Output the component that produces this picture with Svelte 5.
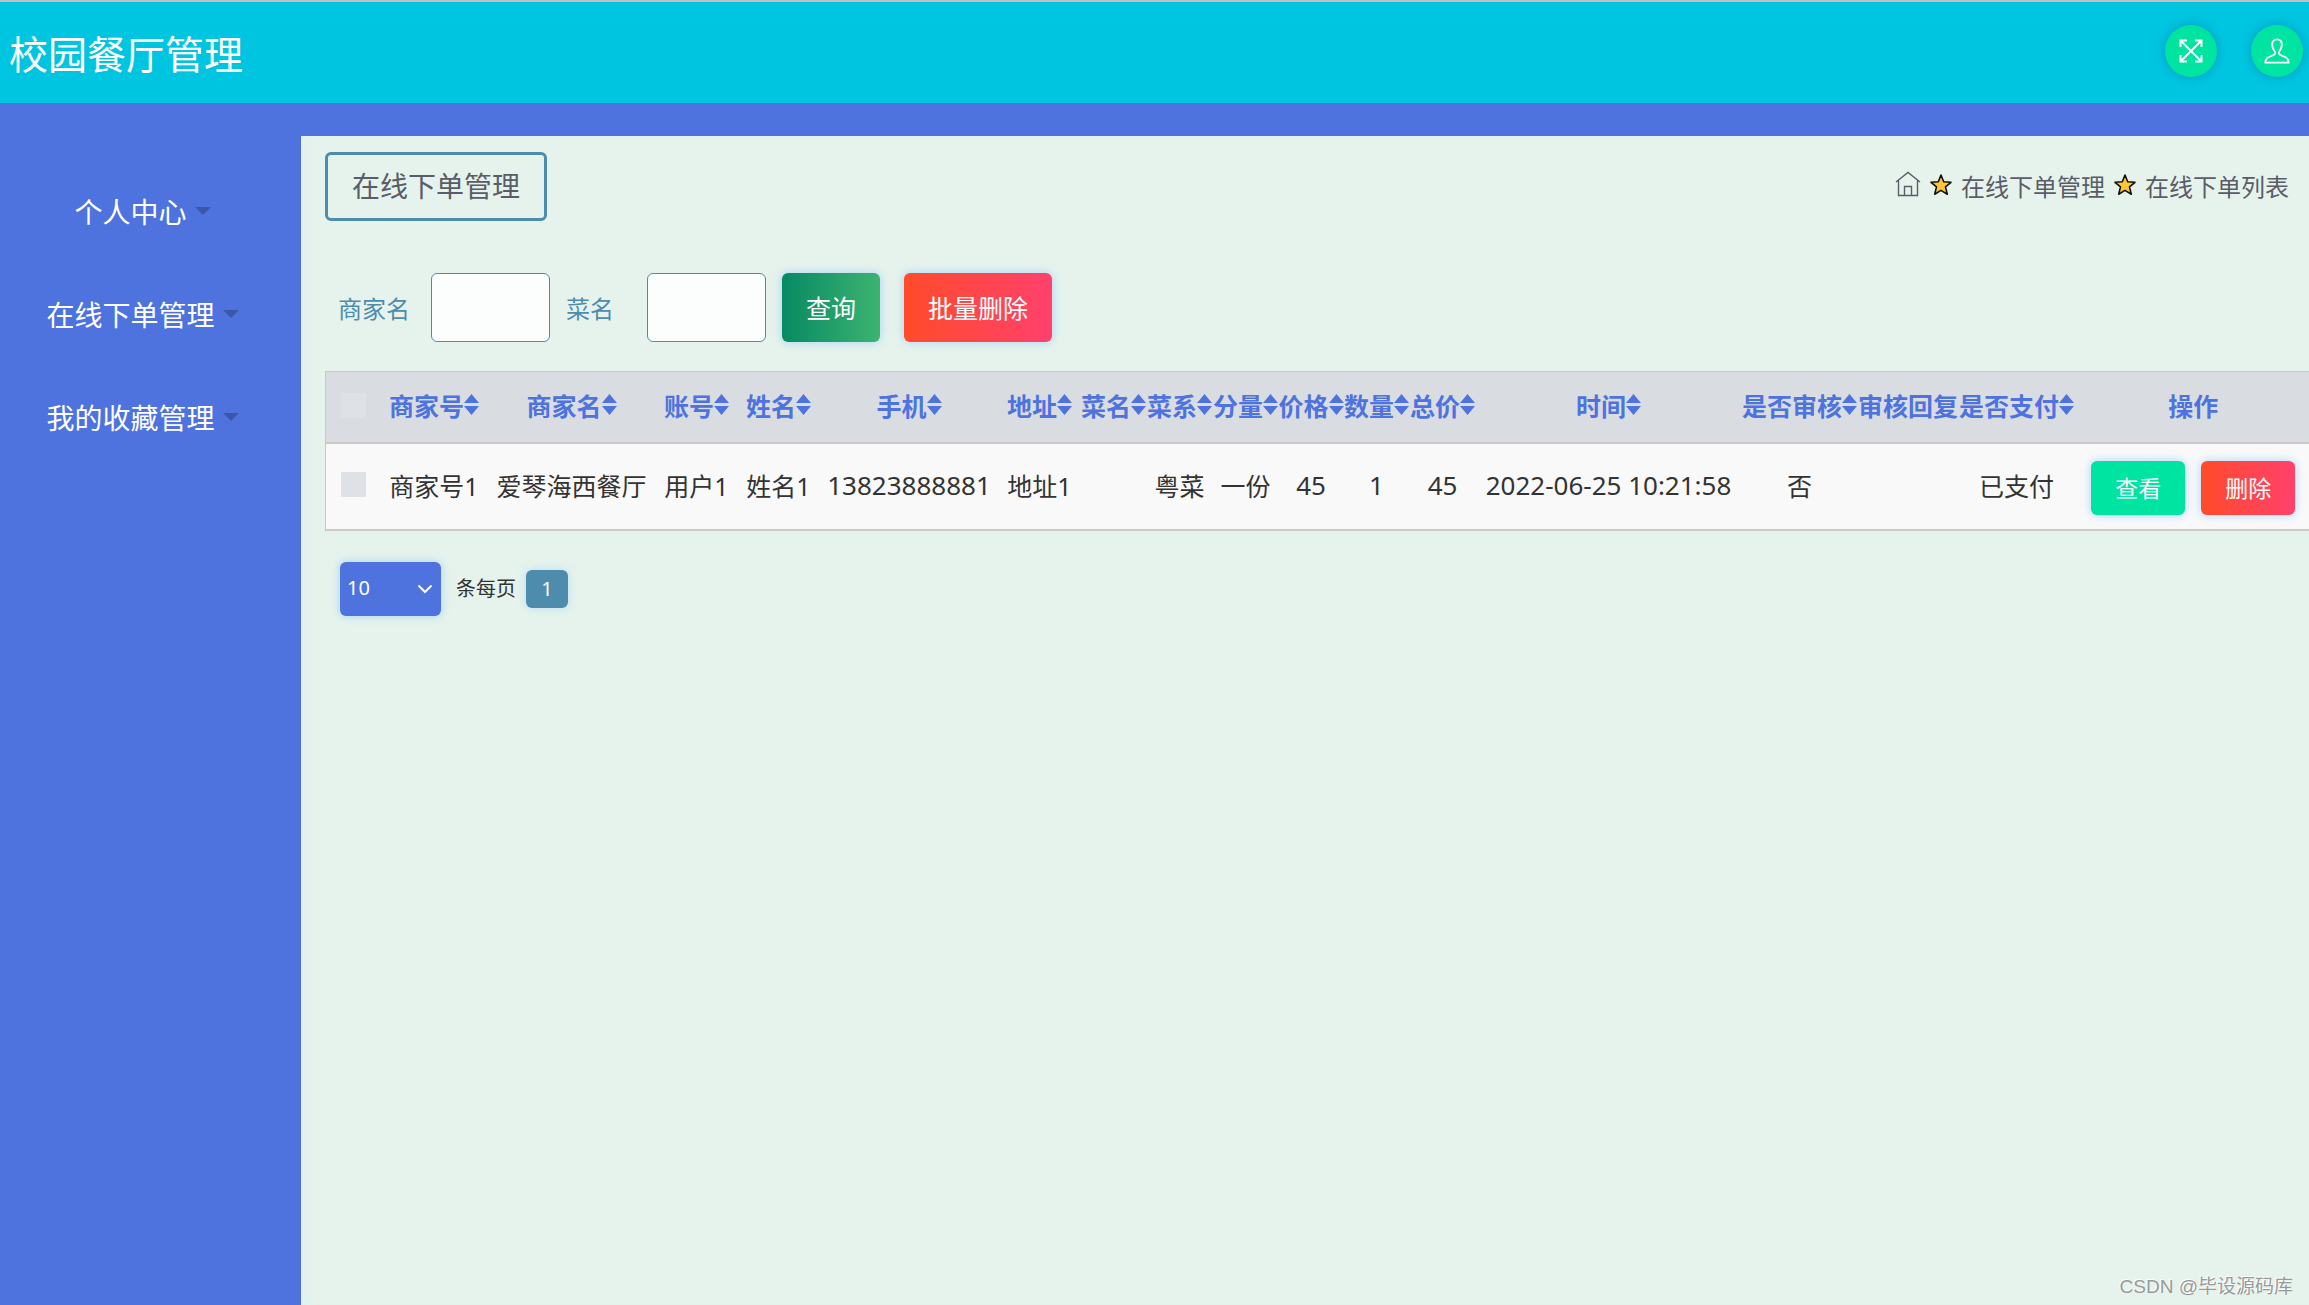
<script lang="ts">
  interface Column {
    key: string
    label: string
    width: number
    sortable?: boolean
    numeric?: boolean
  }

  const menus = ['个人中心', '在线下单管理', '我的收藏管理']

  const columns: Column[] = [
    { key: 'shopNo', label: '商家号', width: 107, sortable: true },
    { key: 'shopName', label: '商家名', width: 168, sortable: true },
    { key: 'account', label: '账号', width: 82, sortable: true },
    { key: 'name', label: '姓名', width: 82, sortable: true },
    { key: 'phone', label: '手机', width: 179, sortable: true, numeric: true },
    { key: 'address', label: '地址', width: 82, sortable: true },
    { key: 'dish', label: '菜名', width: 66, sortable: true },
    { key: 'cuisine', label: '菜系', width: 66, sortable: true },
    { key: 'portion', label: '分量', width: 66, sortable: true },
    { key: 'price', label: '价格', width: 65, sortable: true, numeric: true },
    { key: 'count', label: '数量', width: 66, sortable: true, numeric: true },
    { key: 'total', label: '总价', width: 66, sortable: true, numeric: true },
    { key: 'time', label: '时间', width: 266, sortable: true, numeric: true },
    { key: 'audited', label: '是否审核', width: 116, sortable: true },
    { key: 'reply', label: '审核回复', width: 101 },
    { key: 'paid', label: '是否支付', width: 116, sortable: true }
  ]

  let orders = $state<Record<string, string>[]>([
    {
      shopNo: '商家号1',
      shopName: '爱琴海西餐厅',
      account: '用户1',
      name: '姓名1',
      phone: '13823888881',
      address: '地址1',
      dish: '',
      cuisine: '粤菜',
      portion: '一份',
      price: '45',
      count: '1',
      total: '45',
      time: '2022-06-25 10:21:58',
      audited: '否',
      reply: '',
      paid: '已支付'
    }
  ])

  let shopName = $state('')
  let dishName = $state('')
  let pageSize = $state('10')
  let sortKey = $state('')
  let sortAsc = $state(true)
  let selected = $state<boolean[]>([false])

  function sortBy(key: string) {
    sortAsc = sortKey === key ? !sortAsc : true
    sortKey = key
    orders.sort((a, b) => a[key].localeCompare(b[key]) * (sortAsc ? 1 : -1))
  }

  function toggleAll(e: Event) {
    const checked = (e.target as HTMLInputElement).checked
    selected = orders.map(() => checked)
  }

  function removeSelected() {
    orders = orders.filter((_, i) => !selected[i])
    selected = orders.map(() => false)
  }

  function removeOrder(index: number) {
    orders = orders.filter((_, i) => i !== index)
    selected = orders.map(() => false)
  }
</script>

{#snippet star()}
  <svg class="star" viewBox="0 0 22 22" aria-hidden="true">
    <path d="M11 1l2.700 6.700 7.300.6-5.500 4.600 1.800 7.300L11 16.400l-6.300 3.800 1.800-7.300L1 8.300l7.300-.6z" />
  </svg>
{/snippet}

<div class="page">
  <header class="navbar">
    <h1>校园餐厅管理</h1>
    <div class="nav-actions">
      <button class="round" aria-label="全屏">
        <svg viewBox="0 0 26 26">
          <path d="M3 3l20 20M23 3L3 23M2.500 9V2.500H9M17 2.500h6.500V9M23.500 17v6.500H17M9 23.500H2.500V17" />
        </svg>
      </button>
      <button class="round" aria-label="用户">
        <svg viewBox="0 0 28 28">
          <path d="M14 1.500c-3.600 0-5.300 2.500-5.200 6 .1 3.300 1.200 5 2.700 6.800.9 1.300.6 3.200-1 4C6.500 20 1.500 20.500 1.500 26.500h25c0-6-5-6.500-9-8.200-1.600-.8-1.900-2.700-1-4 1.500-1.800 2.600-3.500 2.700-6.800.1-3.500-1.600-6-5.200-6z" />
        </svg>
      </button>
    </div>
  </header>

  <div class="layout">
    <nav class="sidebar">
      {#each menus as menu}
        <button class="menu-item">{menu}<span class="caret"></span></button>
      {/each}
    </nav>

    <main class="content">
      <div class="title-row">
        <h2>在线下单管理</h2>
        <div class="breadcrumb">
          <a href="#home" aria-label="首页">
            <svg class="home" viewBox="0 0 26 26">
              <path d="M1 11L13 1.500 25 11M3.500 9.500v15h19v-15M9.500 24.500v-9h7v9" />
            </svg>
          </a>
          {@render star()}
          <span>在线下单管理</span>
          {@render star()}
          <span>在线下单列表</span>
        </div>
      </div>

      <form class="filters" onsubmit={(e) => e.preventDefault()}>
        <label for="shop-name">商家名</label>
        <input id="shop-name" class="field" type="text" bind:value={shopName} />
        <label for="dish-name">菜名</label>
        <input id="dish-name" class="field" type="text" bind:value={dishName} />
        <button class="btn query" type="submit">查询</button>
        <button class="btn danger" type="button" onclick={removeSelected}>批量删除</button>
      </form>

      <table>
        <colgroup>
          <col style:width="55px" />
          {#each columns as column}
            <col style:width="{column.width}px" />
          {/each}
          <col style:width="238px" />
        </colgroup>
        <thead>
          <tr>
            <th class="check"><input type="checkbox" aria-label="全选" onchange={toggleAll} /></th>
            {#each columns as column}
              <th>
                {#if column.sortable}
                  <button class="sort" onclick={() => sortBy(column.key)}>
                    {column.label}<svg viewBox="0 0 15 24" aria-hidden="true">
                      <path d="M7.500 1L15 10H0zM0 13h15l-7.500 9z" />
                    </svg>
                  </button>
                {:else}
                  {column.label}
                {/if}
              </th>
            {/each}
            <th>操作</th>
          </tr>
        </thead>
        <tbody>
          {#each orders as order, i}
            <tr>
              <td class="check">
                <input type="checkbox" aria-label="选择" bind:checked={selected[i]} />
              </td>
              {#each columns as column}
                <td class:numeric={column.numeric}>{order[column.key]}</td>
              {/each}
              <td>
                <div class="row-actions">
                  <button class="btn small view">查看</button>
                  <button class="btn small danger" onclick={() => removeOrder(i)}>删除</button>
                </div>
              </td>
            </tr>
          {/each}
        </tbody>
      </table>

      <div class="pager">
        <div class="select-box">
          <select id="page-size" bind:value={pageSize}>
            <option>10</option>
            <option>25</option>
            <option>50</option>
            <option>100</option>
          </select>
          <svg viewBox="0 0 16 10" aria-hidden="true"><path d="M1.500 1.500L8 8l6.500-6.500" /></svg>
        </div>
        <label for="page-size">条每页</label>
        <button class="page-number">1</button>
      </div>
    </main>
  </div>

  <div class="watermark">CSDN @毕设源码库</div>
</div>

<style>
  :global(body) {
    background: #4e73df;
  }

  .page {
    position: relative;
    display: flex;
    flex-direction: column;
    min-height: 100vh;
    overflow: hidden;
    color: #333;
    font-family: 'Noto Sans', 'Noto Sans CJK SC', sans-serif;
    font-size: 25px;
  }

  button,
  input,
  select {
    box-sizing: border-box;
    margin: 0;
    font-family: inherit;
  }

  button {
    padding: 0;
    border: none;
    background: none;
    cursor: pointer;
  }

  h1,
  h2 {
    margin: 0;
    font-weight: 400;
  }

  .navbar {
    display: flex;
    align-items: center;
    justify-content: space-between;
    box-sizing: border-box;
    height: 103px;
    padding: 0 6px 4px 9px;
    border-top: 2px solid #c4bfc0;
    background: #00c5e0;
  }

  h1 {
    padding-top: 2px;
    color: #fff;
    font-size: 39px;
  }

  .nav-actions {
    display: flex;
    gap: 34px;
  }

  .round {
    display: flex;
    align-items: center;
    justify-content: center;
    width: 52px;
    height: 52px;
    border-radius: 50%;
    background: #00e4a1;
    box-shadow: 0 0 10px rgba(20, 100, 150, 0.45);
  }

  .round svg {
    width: 26px;
    height: 26px;
    fill: none;
    stroke: #fff;
    stroke-width: 2;
  }

  .layout {
    display: flex;
    flex: 1;
    padding-top: 33px;
    background: #4e73df;
  }

  .sidebar {
    display: flex;
    flex-direction: column;
    align-items: center;
    flex: 0 0 301px;
    box-sizing: border-box;
    padding: 23px 16px 0 0;
  }

  .menu-item {
    display: flex;
    align-items: center;
    gap: 8px;
    height: 103px;
    color: #fff;
    font-size: 28px;
  }

  .caret {
    border: 8px solid transparent;
    border-top-color: #3a57a8;
    border-bottom: none;
  }

  .content {
    flex: 1;
    min-width: 0;
    padding: 16px 0 0 24px;
    background: #e6f3ec;
    box-shadow: inset 8px 0 8px -4px #dff1f1;
  }

  .title-row {
    display: flex;
    align-items: center;
    justify-content: space-between;
    padding-right: 20px;
  }

  h2 {
    padding: 0 24px;
    border: 3px solid #4e8cae;
    border-radius: 6px;
    color: #5a5c69;
    font-size: 28px;
    line-height: 63px;
  }

  .breadcrumb {
    display: flex;
    align-items: center;
    gap: 9px;
    padding-bottom: 3px;
    color: #5a5c69;
    font-size: 24px;
  }

  .breadcrumb a {
    display: flex;
    padding-bottom: 3px;
    color: inherit;
  }

  .home {
    width: 26px;
    height: 26px;
    fill: none;
    stroke: currentColor;
    stroke-width: 1.4;
  }

  .star {
    width: 22px;
    height: 22px;
    fill: #ffc634;
    stroke: #111;
    stroke-width: 1.6;
    stroke-linejoin: round;
  }

  .filters {
    display: flex;
    align-items: center;
    padding: 52px 0 29px 13px;
    color: #4e8cae;
    font-size: 24px;
  }

  .field {
    width: 119px;
    height: 69px;
    margin: 0 16px 0 21px;
    padding: 0 12px;
    border: 1px solid #4e8cae;
    border-radius: 6px;
    background: #fbfefd;
    color: #333;
    font-size: 24px;
  }

  #dish-name {
    margin-left: 33px;
  }

  .btn {
    height: 69px;
    padding: 0 24px 2px;
    border-radius: 6px;
    color: #fff;
    font-size: 25px;
    box-shadow: 0 0 10px rgba(120, 190, 255, 0.6);
  }

  .btn + .btn {
    margin-left: 24px;
  }

  .query {
    background: linear-gradient(90deg, #078a62, #3cb371);
  }

  .danger {
    background: linear-gradient(90deg, #ff4b2b, #ff416c);
  }

  .view {
    background: #00e4a1;
  }

  table {
    width: 100%;
    table-layout: fixed;
    border-collapse: collapse;
    border: 1px solid #c5c9cc;
    text-align: center;
    white-space: nowrap;
  }

  th,
  td {
    box-sizing: border-box;
    padding: 0 0 3px;
    border-bottom: 2px solid #c8cacc;
  }

  th {
    height: 71px;
    background: #d9dde2;
    color: #4e73df;
    font-weight: 700;
  }

  td {
    height: 87px;
    background: #f9f9f9;
  }

  .numeric {
    font-size: 26px;
  }

  .check input {
    display: block;
    appearance: none;
    width: 25px;
    height: 25px;
    margin: 0 auto;
    background: #dee2e6;
  }

  .check input:checked {
    background: #4e73df;
  }

  .sort {
    display: inline-flex;
    align-items: center;
    color: inherit;
    font-size: inherit;
    font-weight: inherit;
  }

  .sort svg {
    width: 15px;
    height: 24px;
    fill: currentColor;
  }

  .row-actions {
    display: flex;
    justify-content: center;
    padding-top: 6px;
  }

  .small {
    height: 54px;
    font-size: 23px;
  }

  .small + .small {
    margin-left: 16px;
  }

  .pager {
    display: flex;
    align-items: center;
    padding: 31px 0 0 15px;
    font-size: 20px;
  }

  .pager label {
    margin: 0 10px 0 15px;
    padding-bottom: 2px;
  }

  .select-box {
    position: relative;
    width: 101px;
  }

  select {
    display: block;
    appearance: none;
    width: 100%;
    height: 54px;
    padding: 0 7px 2px;
    border: none;
    border-radius: 6px;
    background: #4e73df;
    color: #fff;
    font-size: 20px;
    box-shadow: 0 0 10px rgba(120, 190, 255, 0.6);
  }

  .select-box svg {
    position: absolute;
    top: 22px;
    right: 8px;
    width: 16px;
    height: 10px;
    fill: none;
    stroke: #fff;
    stroke-width: 2;
    pointer-events: none;
  }

  .page-number {
    width: 42px;
    height: 38px;
    border-radius: 6px;
    background: #4e8cae;
    color: #fff;
    font-size: 20px;
    box-shadow: 0 0 10px rgba(120, 190, 255, 0.4);
  }

  .watermark {
    position: absolute;
    right: 16px;
    bottom: 7px;
    color: #999;
    font-family: 'Liberation Sans', 'Noto Sans CJK SC', sans-serif;
    font-size: 19px;
    text-shadow: -1px -1px 0 #fff;
  }
</style>
